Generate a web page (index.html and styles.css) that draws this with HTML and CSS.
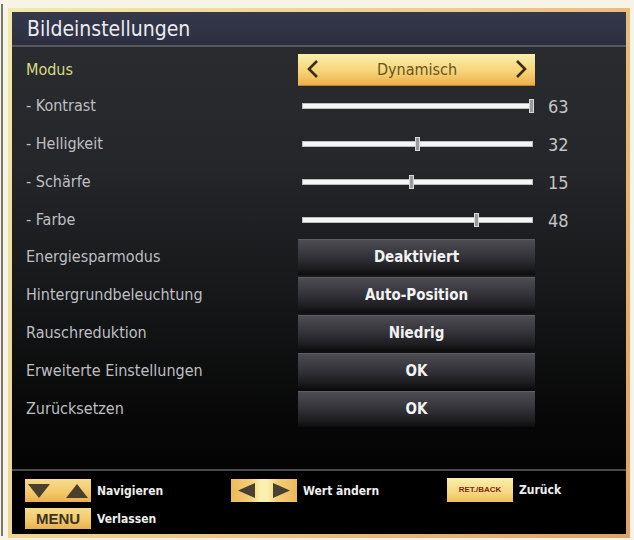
FILE: index.html
```html
<!DOCTYPE html>
<html lang="de">
<head>
<meta charset="utf-8">
<title>Bildeinstellungen</title>
<link rel="stylesheet" href="styles.css">
</head>
<body>
<div class="page">
  <div class="rule"></div>
  <div class="frame">
    <div class="panel">
      <div class="titlebar">Bildeinstellungen</div>
      <div class="list">
        <div class="row row-mode">
          <span class="label label-mode">Modus</span>
          <div class="select">
            <svg class="chev" width="14" height="20" viewBox="0 0 14 20"><polyline points="11,2 3,10 11,18" fill="none" stroke="#3a2e10" stroke-width="2.6"/></svg>
            <span class="select-text">Dynamisch</span>
            <svg class="chev" width="14" height="20" viewBox="0 0 14 20"><polyline points="3,2 11,10 3,18" fill="none" stroke="#3a2e10" stroke-width="2.6"/></svg>
          </div>
        </div>
        <div class="row row-slider">
          <span class="label">- Kontrast</span>
          <div class="slider"><div class="track"></div><div class="thumb" style="left: 229px"></div></div>
          <span class="value">63</span>
        </div>
        <div class="row row-slider">
          <span class="label">- Helligkeit</span>
          <div class="slider"><div class="track"></div><div class="thumb" style="left: 115px"></div></div>
          <span class="value">32</span>
        </div>
        <div class="row row-slider">
          <span class="label">- Schärfe</span>
          <div class="slider"><div class="track"></div><div class="thumb" style="left: 109px"></div></div>
          <span class="value">15</span>
        </div>
        <div class="row row-slider">
          <span class="label">- Farbe</span>
          <div class="slider"><div class="track"></div><div class="thumb" style="left: 174px"></div></div>
          <span class="value">48</span>
        </div>
        <div class="row row-button">
          <span class="label">Energiesparmodus</span>
          <div class="button">Deaktiviert</div>
        </div>
        <div class="row row-button">
          <span class="label">Hintergrundbeleuchtung</span>
          <div class="button">Auto-Position</div>
        </div>
        <div class="row row-button">
          <span class="label">Rauschreduktion</span>
          <div class="button">Niedrig</div>
        </div>
        <div class="row row-button">
          <span class="label">Erweiterte Einstellungen</span>
          <div class="button">OK</div>
        </div>
        <div class="row row-button">
          <span class="label">Zurücksetzen</span>
          <div class="button">OK</div>
        </div>
      </div>
      <div class="footer">
        <div class="hint">
          <div class="key key-arrows">
            <svg width="66" height="23" viewBox="0 0 66 23"><polygon points="3,5 25,5 14,19" fill="#4a4030"/><polygon points="41,19 63,19 52,5" fill="#4a4030"/></svg>
          </div>
          <span class="hint-text">Navigieren</span>
        </div>
        <div class="hint">
          <div class="key key-lr">
            <svg width="66" height="23" viewBox="0 0 66 23"><polygon points="7,11.5 24,4 24,19" fill="#4a4030"/><polygon points="59,11.5 42,4 42,19" fill="#4a4030"/></svg>
          </div>
          <span class="hint-text">Wert ändern</span>
        </div>
        <div class="hint hint-back">
          <div class="key key-back">RET./BACK</div>
          <span class="hint-text">Zurück</span>
        </div>
        <div class="hint">
          <div class="key key-menu">MENU</div>
          <span class="hint-text">Verlassen</span>
        </div>
      </div>
    </div>
  </div>
</div>
</body>
</html>
```

FILE: styles.css
```css
html, body {
  margin: 0;
  padding: 0;
}

body {
  background: #f7f3e6;
  width: 634px;
  height: 540px;
  overflow: hidden;
  font-family: "DejaVu Sans Condensed", "DejaVu Sans", sans-serif;
  font-stretch: condensed;
}

.page {
  display: flex;
  padding: 4px 0 0 1px;
}

.rule {
  width: 2px;
  height: 532px;
  background: #77776f;
}

.frame {
  margin: 4px 0 0 5px;
  width: 614px;
  height: 522px;
  border: 4px solid #e8c27a;
  border-image: linear-gradient(120deg, #f3e9a8 0%, #eccb86 50%, #e0a264 100%) 1;
}

.panel {
  width: 614px;
  height: 522px;
  display: flex;
  flex-direction: column;
  background: linear-gradient(180deg, #2c2d31 0%, #25262a 30%, #141516 58%, #070707 78%, #000 100%);
}

.titlebar {
  height: 35px;
  box-sizing: border-box;
  padding: 3px 0 0 15px;
  background: linear-gradient(180deg, #35374b, #2d2f41);
  border-bottom: 2px solid #55575f;
  color: #ecebf2;
  font-size: 21px;
  line-height: 28px;
}

.list {
  padding: 5px 0 0 14px;
  height: 422px;
  box-sizing: border-box;
}

.row {
  display: grid;
  grid-template-columns: 272px 237px auto;
  align-items: center;
}

.row-mode {
  height: 35px;
}

.row-slider {
  height: 38px;
}

.row-button {
  height: 38px;
  align-items: start;
}

.label {
  color: #bfbfc2;
  font-size: 16px;
  line-height: 20px;
}

.row-button .label {
  line-height: 36px;
}

.label-mode {
  color: #d6dc82;
}

.select {
  height: 32px;
  box-sizing: border-box;
  display: flex;
  align-items: center;
  justify-content: space-between;
  padding: 0 7px 0 8px;
  background: linear-gradient(180deg, #fbeeaa 0%, #f7d47a 55%, #eeb04a 100%);
  border-bottom: 1px solid #c08030;
}

.select-text {
  color: #655520;
  font-size: 16px;
}

.chev {
  display: block;
}

.slider {
  position: relative;
  height: 14px;
}

.track {
  position: absolute;
  left: 4px;
  top: 4px;
  width: 231px;
  height: 6px;
  box-sizing: border-box;
  background: #f6f6f6;
  border: 1px solid #bdbdbd;
}

.thumb {
  position: absolute;
  top: 0;
  width: 5px;
  height: 14px;
  margin-left: 2px;
  box-sizing: border-box;
  background: #9a9a9a;
  border: 1px solid #d8d8d8;
}

.value {
  padding-left: 13px;
  color: #c4c4c6;
  font-size: 18px;
}

.button {
  height: 36px;
  box-sizing: border-box;
  background: linear-gradient(180deg, #4c4c52 0%, #34343a 45%, #1e1e21 80%, #0c0c0d 100%);
  border-top: 1px solid #5e5e64;
  color: #f2f2f2;
  font-size: 15px;
  font-weight: bold;
  text-align: center;
  line-height: 34px;
}

.footer {
  flex: 1;
  border-top: 2px solid #4a4a4c;
  background: #000;
  display: grid;
  grid-template-columns: 206px 216px auto;
  grid-auto-rows: 23px;
  row-gap: 5px;
  align-content: start;
  padding: 8px 0 0 13px;
}

.hint {
  display: flex;
  align-items: center;
  gap: 6px;
}

.hint-back {
  margin-top: -2px;
}

.hint-text {
  color: #eeeeee;
  font-size: 12px;
  font-weight: bold;
}

.key {
  width: 66px;
  height: 23px;
  box-sizing: border-box;
  background: linear-gradient(180deg, #f7dc8a 0%, #f2c868 60%, #e8b050 100%);
}

.key svg {
  display: block;
}

.key-lr {
  background: linear-gradient(90deg, #eeb85a 0%, #f4cf78 30%, #fbf0b0 45%, #fbf0b0 55%, #f4cf78 70%, #eeb85a 100%);
}

.key-menu {
  height: 21px;
  color: #3a3326;
  font-family: "Liberation Sans", sans-serif;
  font-stretch: normal;
  font-size: 15px;
  font-weight: bold;
  text-align: center;
  line-height: 21px;
}

.key-back {
  height: 24px;
  background: linear-gradient(180deg, #fbeeb0 0%, #f6d880 60%, #eebf5a 100%);
  color: #7a2a10;
  font-family: "Liberation Sans", sans-serif;
  font-stretch: normal;
  font-size: 8px;
  font-weight: bold;
  text-align: center;
  line-height: 24px;
}
```
